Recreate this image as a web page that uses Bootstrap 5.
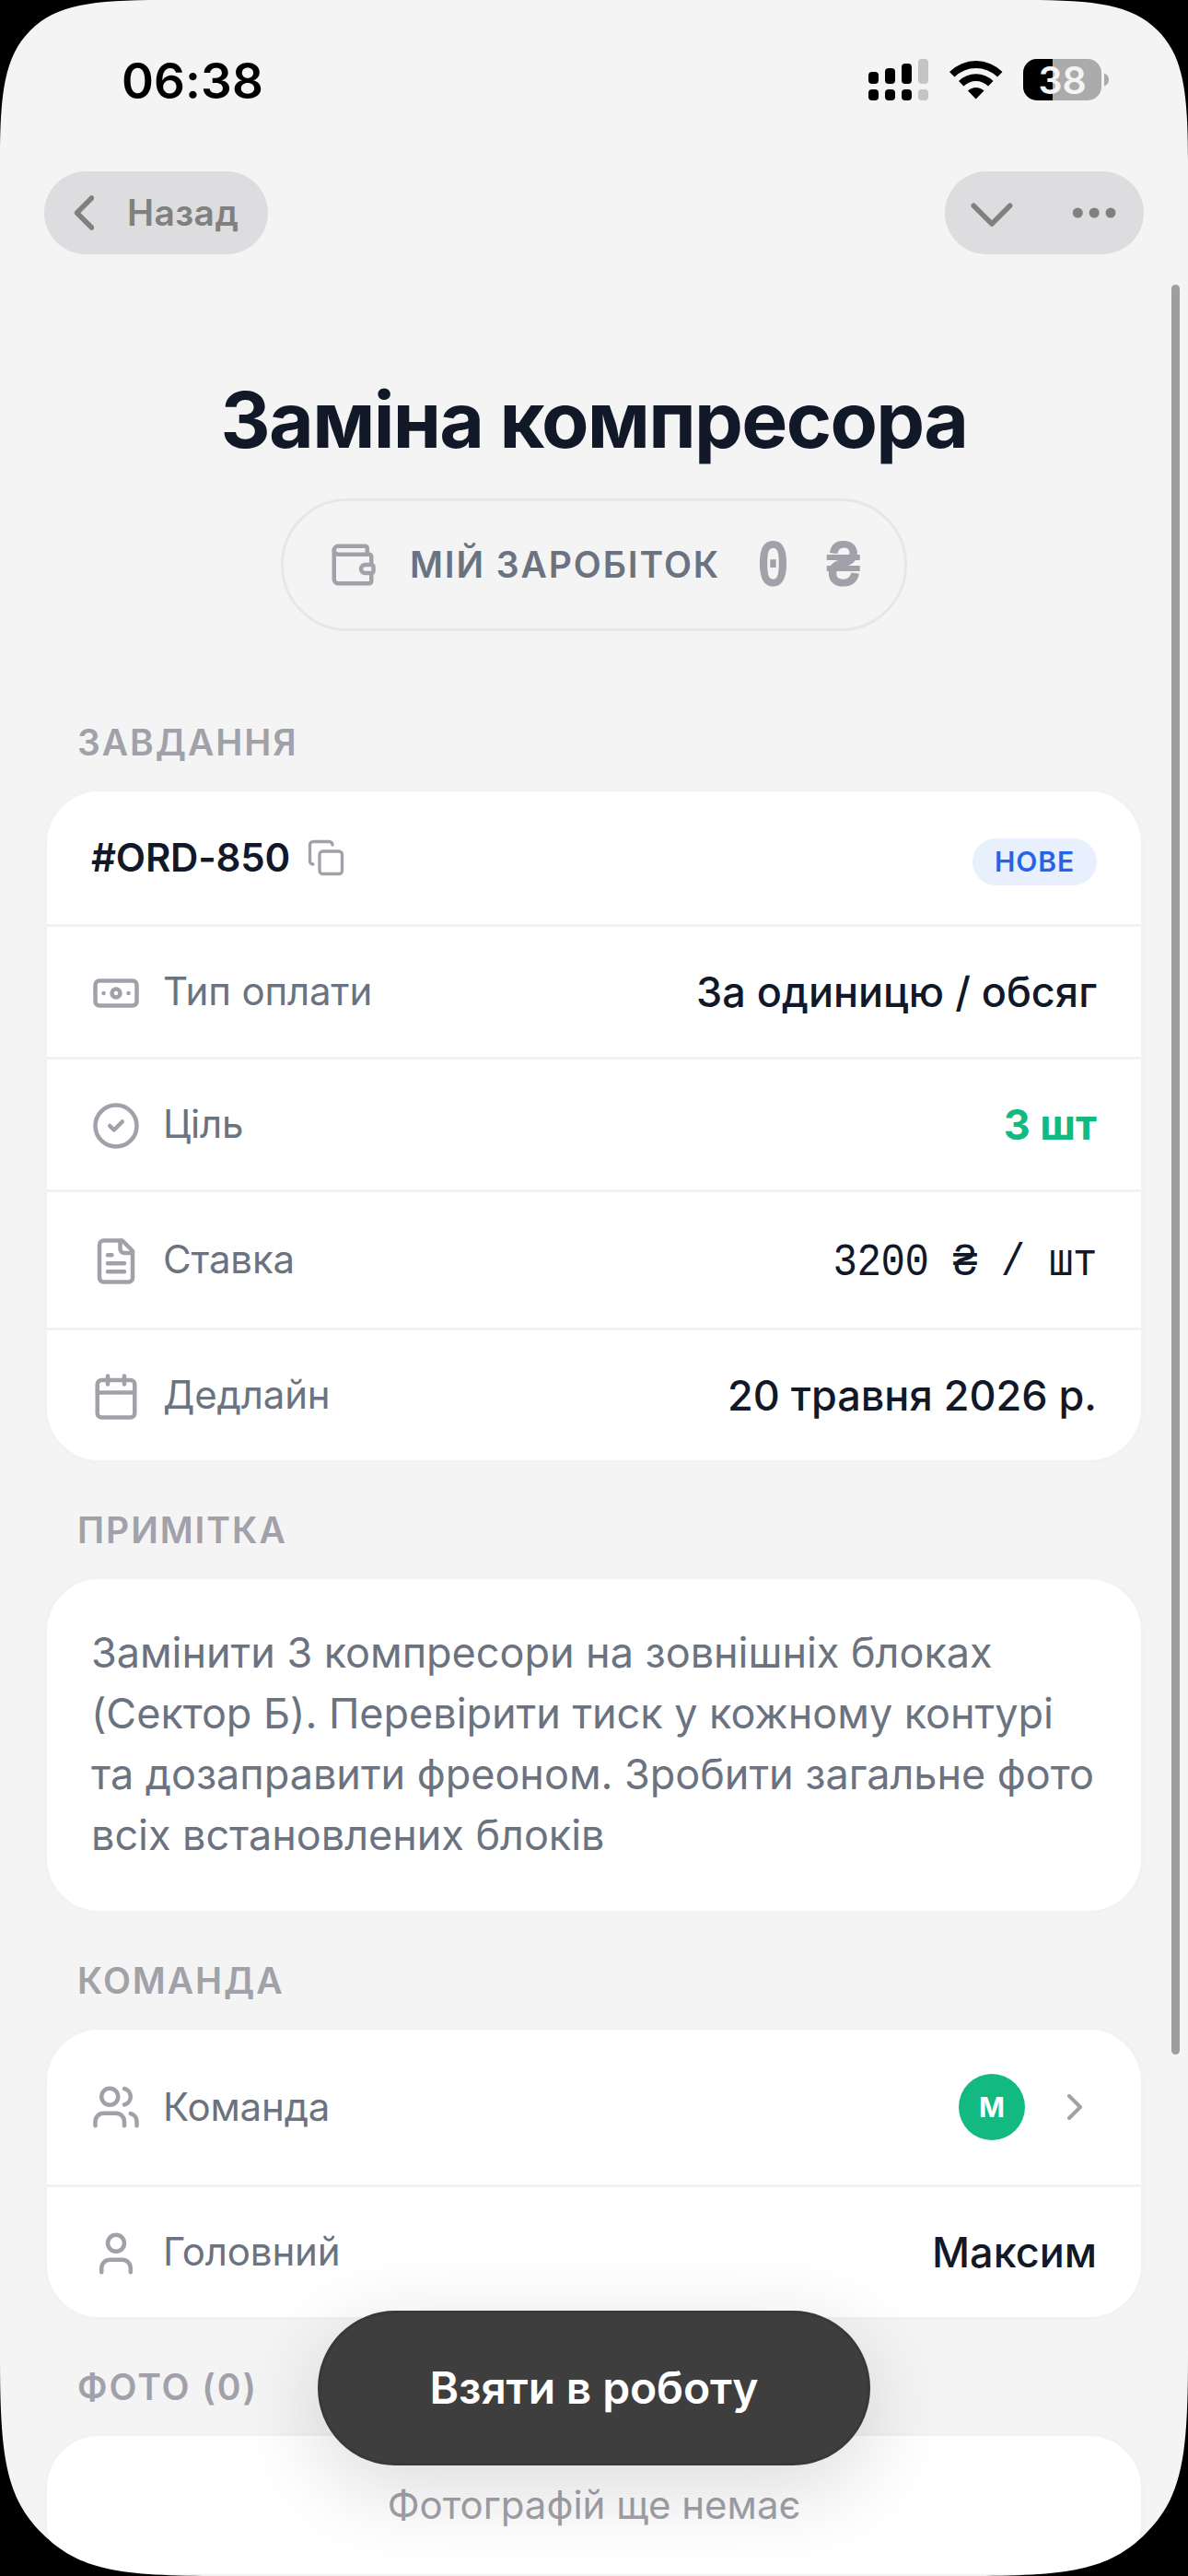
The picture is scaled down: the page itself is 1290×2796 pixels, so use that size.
<!DOCTYPE html>
<html lang="uk">
<head>
<meta charset="utf-8">
<meta name="viewport" content="width=device-width, initial-scale=1">
<title>Заміна компресора</title>
<link href="https://cdn.jsdelivr.net/npm/bootstrap@5.3.0/dist/css/bootstrap.min.css" rel="stylesheet">
<style>
  html, body { height: 2796px; }
  body { font-family: Inter, "Liberation Sans", sans-serif; background: #f4f4f4; color: #111827; line-height: 1.2; }
  .phone { width: 1290px; height: 2796px; background: #f4f4f4; }
  .status { height: 186px; padding: 60px 86px 0 132px; }
  .clock { font-size: 53px; font-weight: 600; line-height: 56px; color: #000; letter-spacing: .1px; }
  .chrome { padding: 0 48px; height: 90px; margin-bottom: 130px; }
  .pill { background: #dddddf; color: #808080; height: 90px; border-radius: 45px; font-size: 39px; font-weight: 600; border: 0; padding: 0 32px; }
  .back-label { margin-left: 36px; letter-spacing: .4px; }
  .headline { font-size: 84px; line-height: 100px; font-weight: 700; letter-spacing: -1.7px; margin: 0 0 35px; text-align: center; }
  .earn { width: 680px; height: 144px; border: 3px solid #e7e7e7; border-radius: 72px; padding: 0 48px; margin: 0 auto 91px; }
  .earn-label { font-size: 39px; font-weight: 600; letter-spacing: 1.9px; color: #6b7280; margin-left: 35px; }
  .muted { color: #a1a1aa; }
  .digits { font-family: "Liberation Mono", monospace; transform: scaleY(1.12); display: inline-block; }
  .earn .digits { font-size: 60px; font-weight: 700; letter-spacing: 2.2px; margin-right: -2px; padding-top: 6px; transform: scaleY(1.2); }
  .val .digits { font-size: 44px; font-weight: 400; line-height: 50px; letter-spacing: -.35px; }
  .label { height: 60px; line-height: 60px; padding-left: 84px; margin: 0 0 20px; font-size: 39px; font-weight: 600; letter-spacing: 1.95px; color: #a1a1aa; }
  .panel { margin: 0 48px 43px; border: 3px solid #f2f2f3; border-radius: 60px; background: #fff; overflow: hidden; }
  .line { height: 144px; padding: 0 48px; border: 0; border-bottom: 3px solid #f2f2f3; border-radius: 0; background: transparent; color: inherit; }
  .line:last-child { border-bottom: 0; height: 141px; }
  .line.first { height: 147px; }
  .line.tall { height: 150px; }
  .line.team { height: 171px; }
  .ico { width: 54px; height: 54px; margin-top: 3px; }
  .key { font-size: 42px; color: #6b7280; margin-left: 24px; letter-spacing: -.17px; }
  .val { font-size: 45px; font-weight: 500; color: #111827; }
  .val.goal { font-weight: 700; color: #12b981; }
  .order { font-size: 42px; font-weight: 600; letter-spacing: -.2px; }
  .copy { margin-left: 18px; stroke-width: 1.9 !important; }
  .state { height: 51px; line-height: 51px; border-radius: 26px; padding: 0 24px; margin-top: 9px; font-size: 30px; font-weight: 600; letter-spacing: .9px; background: #e8effd; color: #2563eb; }
  .note { padding: 47px 48px 0; height: 360px; font-size: 45px; line-height: 66px; letter-spacing: -.04px; color: #6b7280; margin: 0; }
  .face { width: 72px; height: 72px; border-radius: 50%; background: #12b981; color: #fff; font-size: 30px; font-weight: 700; margin-right: 30px; }
  .empty { height: 150px; padding-top: 44px; font-size: 42px; line-height: 62px; text-align: center; color: #a1a1aa; }
  .take { position: absolute; left: 345px; top: 2508px; width: 600px; height: 168px; border-radius: 84px; background: #3e3e3e; border: 3px solid #393939; color: #fff; font-size: 48px; font-weight: 600; letter-spacing: -.15px; box-shadow: 0 24px 96px rgba(0,0,0,.15); }
  .thumb { position: absolute; left: 1272px; top: 309px; width: 9px; height: 1921px; border-radius: 5px; background: #9e9e9e; }
  .bezel { position: absolute; left: 0; top: 0; pointer-events: none; }
  .stroke { fill: none; stroke: currentColor; stroke-width: 2; stroke-linecap: round; stroke-linejoin: round; }
</style>
</head>
<body>
<div class="phone position-relative overflow-hidden">
  <header>
    <div class="status d-flex justify-content-between align-items-start">
      <div class="clock">06:38</div>
      <svg width="262" height="50" viewBox="942 60 262 50">
        <g fill="#000">
          <rect x="943" y="78" width="11" height="13" rx="4"/><rect x="961" y="74" width="11" height="17" rx="4"/><rect x="979" y="69" width="11" height="22" rx="4"/>
          <rect x="943" y="97" width="11" height="12" rx="4"/><rect x="961" y="97" width="11" height="12" rx="4"/><rect x="979" y="97" width="11" height="12" rx="4"/>
        </g>
        <g fill="#c4c4c4"><rect x="997" y="64" width="11" height="27" rx="4"/><rect x="997" y="97" width="11" height="12" rx="4"/></g>
        <path d="M1031 78A40.500 40.500 0 0 1 1088.500 78L1083 83.500A33 33 0 0 0 1036.500 83.500Z"/>
        <path d="M1041 88A26.500 26.500 0 0 1 1078.500 88L1073 93.500A19 19 0 0 0 1046.500 93.500Z"/>
        <path d="M1051 98.500A12.500 12.500 0 0 1 1068.500 98.500L1059.700 107.500Z"/>
        <clipPath id="cell"><rect x="1111" y="64" width="85" height="45" rx="15"/></clipPath>
        <g clip-path="url(#cell)"><rect x="1111" y="64" width="85" height="45" fill="#ababab"/><rect x="1111" y="64" width="32" height="45" fill="#000"/></g>
        <path d="M1199 79.500Q1204 81.500 1204 86.500T1199 93.500Z" fill="#ababab"/>
        <text x="1153.600" y="101.500" text-anchor="middle" font-family="Inter, sans-serif" font-size="41" font-weight="600" fill="#f4f4f4">38</text>
      </svg>
    </div>
    <nav class="chrome d-flex justify-content-between">
      <button class="pill d-flex align-items-center">
        <svg width="22" height="40" viewBox="80 211 22 40" fill="none" stroke="#808080" stroke-width="5.500" stroke-linecap="round" stroke-linejoin="round"><path d="M99.500 215 83.500 231 99.500 247"/></svg>
        <span class="back-label">Назад</span>
      </button>
      <div class="pill d-flex align-items-center p-0">
        <svg width="216" height="90" viewBox="1026 186 216 90" fill="none" stroke="#808080" stroke-width="5.500" stroke-linecap="round" stroke-linejoin="round"><path d="M1057.200 223.200 1077 243 1096.700 223.200"/><g fill="#808080" stroke="none"><circle cx="1170.300" cy="231" r="5.500"/><circle cx="1188.200" cy="231" r="5.500"/><circle cx="1206" cy="231" r="5.500"/></g></svg>
      </div>
    </nav>
  </header>

  <main>
    <h1 class="headline">Заміна компресора</h1>
    <div class="earn d-flex align-items-center">
      <svg class="stroke muted flex-shrink-0" width="54" height="54" viewBox="0 0 24 24"><path d="M19 7V4a1 1 0 0 0-1-1H5a2 2 0 0 0 0 4h15a1 1 0 0 1 1 1v4h-3a2 2 0 0 0 0 4h3a1 1 0 0 0 1-1v-2a1 1 0 0 0-1-1"/><path d="M3 5v14a2 2 0 0 0 2 2h15a1 1 0 0 0 1-1v-4"/></svg>
      <span class="earn-label text-nowrap">МІЙ ЗАРОБІТОК</span>
      <span class="digits muted ms-auto text-nowrap">0 ₴</span>
    </div>

    <h2 class="label">ЗАВДАННЯ</h2>
    <section class="panel list-group">
      <div class="line first list-group-item d-flex align-items-center">
        <span class="order">#ORD-850</span>
        <svg class="stroke muted copy" width="42" height="42" viewBox="0 0 24 24"><rect x="8" y="8" width="14" height="14" rx="2"/><path d="M4 16c-1.100 0-2-.9-2-2V4c0-1.100.9-2 2-2h10c1.100 0 2 .9 2 2"/></svg>
        <span class="state ms-auto">НОВЕ</span>
      </div>
      <div class="line list-group-item d-flex align-items-center">
        <svg class="ico stroke muted" viewBox="0 0 24 24"><rect x="2" y="6" width="20" height="12" rx="2"/><circle cx="12" cy="12" r="2"/><path d="M6 12h.01M18 12h.01"/></svg>
        <span class="key">Тип оплати</span><span class="val ms-auto">За одиницю / обсяг</span>
      </div>
      <div class="line list-group-item d-flex align-items-center">
        <svg class="ico stroke muted" viewBox="0 0 24 24"><circle cx="12" cy="12" r="10"/><path d="m9 12 2 2 4-4"/></svg>
        <span class="key">Ціль</span><span class="val goal ms-auto">3 шт</span>
      </div>
      <div class="line tall list-group-item d-flex align-items-center">
        <svg class="ico stroke muted" viewBox="0 0 24 24"><path d="M15 2H6a2 2 0 0 0-2 2v16a2 2 0 0 0 2 2h12a2 2 0 0 0 2-2V7Z"/><path d="M14 2v4a2 2 0 0 0 2 2h4M10 9H8M16 13H8M16 17H8"/></svg>
        <span class="key">Ставка</span><span class="val ms-auto"><span class="digits">3200 ₴ / шт</span></span>
      </div>
      <div class="line list-group-item d-flex align-items-center">
        <svg class="ico stroke muted" viewBox="0 0 24 24"><path d="M8 2v4M16 2v4M3 10h18"/><rect x="3" y="4" width="18" height="18" rx="2"/></svg>
        <span class="key">Дедлайн</span><span class="val ms-auto">20 травня 2026 р.</span>
      </div>
    </section>

    <h2 class="label">ПРИМІТКА</h2>
    <section class="panel">
      <p class="note text-nowrap">Замінити 3 компресори на зовнішніх блоках<br>(Сектор Б). Перевірити тиск у кожному контурі<br>та дозаправити фреоном. Зробити загальне фото<br>всіх встановлених блоків</p>
    </section>

    <h2 class="label">КОМАНДА</h2>
    <section class="panel list-group">
      <div class="line team list-group-item d-flex align-items-center">
        <svg class="ico stroke muted mt-0" viewBox="0 0 24 24"><path d="M16 21v-2a4 4 0 0 0-4-4H6a4 4 0 0 0-4 4v2"/><circle cx="9" cy="7" r="4"/><path d="M22 21v-2a4 4 0 0 0-3-3.870M16 3.130a4 4 0 0 1 0 7.750"/></svg>
        <span class="key">Команда</span>
        <span class="face ms-auto d-flex align-items-center justify-content-center">М</span>
        <svg class="stroke muted" width="48" height="48" viewBox="0 0 24 24"><path d="m9 18 6-6-6-6"/></svg>
      </div>
      <div class="line list-group-item d-flex align-items-center">
        <svg class="ico stroke muted" viewBox="0 0 24 24"><path d="M19 21v-2a4 4 0 0 0-4-4H9a4 4 0 0 0-4 4v2"/><circle cx="12" cy="7" r="4"/></svg>
        <span class="key">Головний</span><span class="val ms-auto">Максим</span>
      </div>
    </section>

    <h2 class="label">ФОТО (0)</h2>
    <section class="panel mb-0">
      <div class="empty">Фотографій ще немає</div>
    </section>
  </main>

  <button class="take">Взяти в роботу</button>
  <div class="thumb"></div>
  <svg class="bezel" width="1290" height="2796" viewBox="0 0 1290 2796">
    <path d="M0 0H175C100 0 61 5 33 33S0 100 0 175Z"/>
    <path d="M1290 0H1115C1190 0 1229 5 1257 33S1290 100 1290 175Z"/>
    <path d="M0 2796H240C130 2796 86 2790 46 2750S0 2666 0 2556Z"/>
    <path d="M1290 2796H1050C1160 2796 1204 2790 1244 2750S1290 2666 1290 2556Z"/>
  </svg>
</div>
<script src="https://cdn.jsdelivr.net/npm/bootstrap@5.3.0/dist/js/bootstrap.bundle.min.js"></script>
</body>
</html>
